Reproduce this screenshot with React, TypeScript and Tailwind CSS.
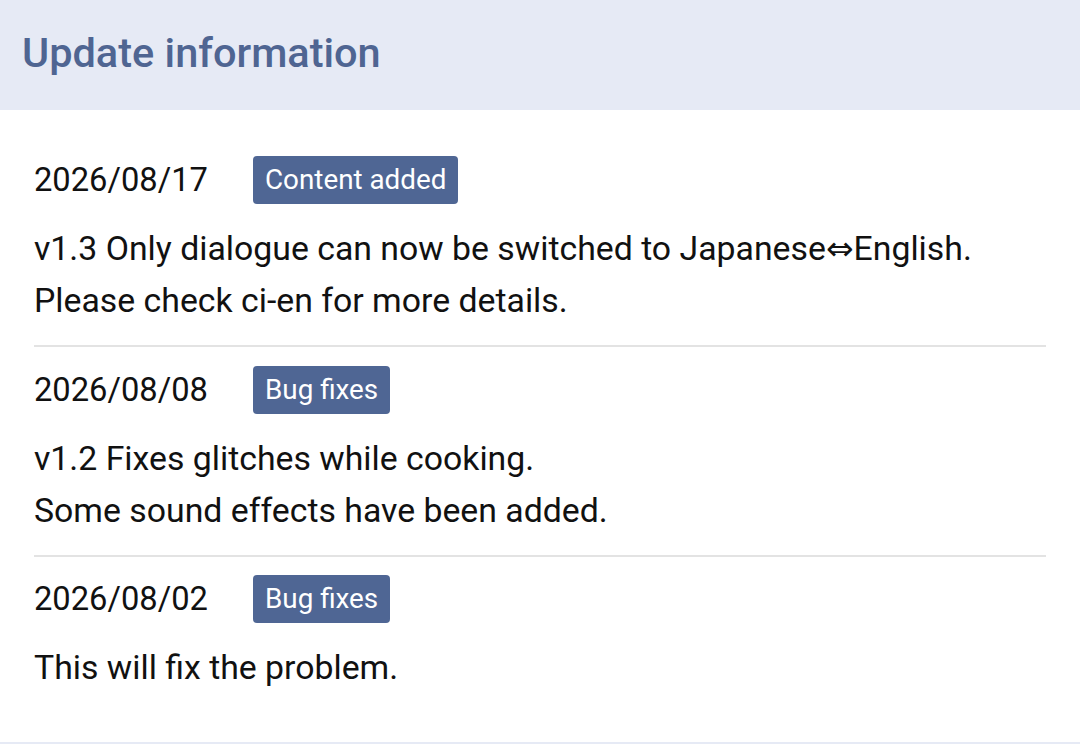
import React from 'react'

type Update = { date: string; tag: string; lines: React.ReactNode[] }

const updates: Update[] = [
  {
    date: '2026/08/17',
    tag: 'Content added',
    lines: [
      <>
        v1.3 Only dialogue can now be switched to Japanese
        <span className="font-['DejaVu_Sans',sans-serif] text-[33px]">⇔</span>English.
      </>,
      'Please check ci-en for more details.',
    ],
  },
  {
    date: '2026/08/08',
    tag: 'Bug fixes',
    lines: ['v1.2 Fixes glitches while cooking.', 'Some sound effects have been added.'],
  },
  {
    date: '2026/08/02',
    tag: 'Bug fixes',
    lines: ['This will fix the problem.'],
  },
]

export default function App() {
  return (
    <div className="w-[1080px] h-[744px] bg-[#e6eaf5] font-['Roboto','Noto_Sans',sans-serif] overflow-hidden">
      <div className="h-[110px] flex items-center px-[22px] pb-[4px]">
        <h1 className="text-[41.5px] font-medium text-[#4f6592]">Update information</h1>
      </div>
      <div className="bg-white px-[34px] pt-[27px] pb-[48px]">
        {updates.map((u, i) => (
          <div key={u.date} className={i < updates.length - 1 ? 'border-b-2 border-[#e3e3e3] pt-[19px] pb-[18px]' : 'pt-[18px]'}>
            <div className="flex items-center">
              <span className="w-[219px] text-[32.7px] text-[#111] leading-[48px]">{u.date}</span>
              <span className="h-[48px] px-[12px] rounded-[4px] bg-[#4f6694] text-white text-[27.8px] leading-[48px]">
                {u.tag}
              </span>
            </div>
            <div className="mt-[19px] text-[33.8px] leading-[52px] text-[#111]">
              {u.lines.map((l, j) => (
                <p key={j}>{l}</p>
              ))}
            </div>
          </div>
        ))}
      </div>
    </div>
  )
}
